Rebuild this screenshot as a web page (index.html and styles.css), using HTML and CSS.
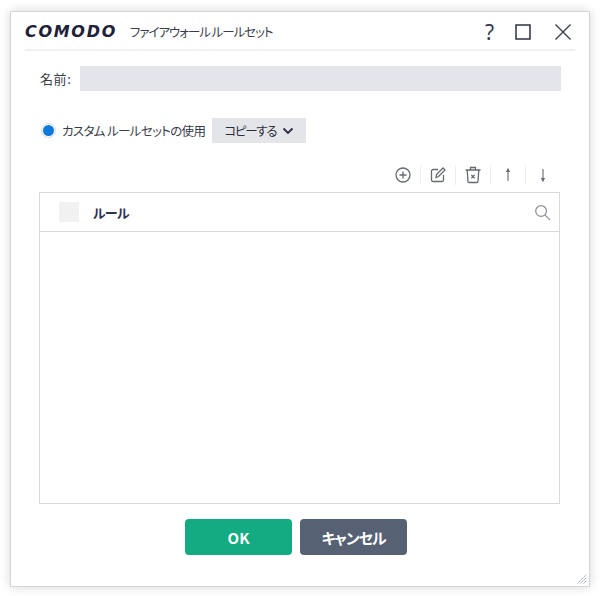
FILE: index.html
```html
<!DOCTYPE html>
<html lang="ja">
<head>
<meta charset="utf-8">
<title>COMODO</title>
<link rel="stylesheet" href="styles.css">
</head>
<body>
<div class="dialog">
  <header class="titlebar">
    <span class="logo">COMODO</span>
    <span class="title">ファイアウォール ルールセット</span>
    <div class="winbtns">
      <span class="help">?</span>
      <svg class="winicon" viewBox="0 0 16 16"><rect x="1" y="1" width="14" height="14" fill="none" stroke="#3a3d50" stroke-width="1.600"/></svg>
      <svg class="winicon" viewBox="0 0 16 16"><path d="M.5 .5l15 15M15.500 .5l-15 15" fill="none" stroke="#3a3d50" stroke-width="1.400"/></svg>
    </div>
  </header>
  <div class="name-row">
    <label class="name-label">名前:</label>
    <div class="name-input"></div>
  </div>
  <div class="mode-row">
    <span class="radio"></span>
    <span class="mode-label">カスタム ルールセットの使用</span>
    <button class="copy-btn"><span class="copy-text">コピーする</span>
      <svg class="chev" viewBox="0 0 12 8"><path d="M1.500 1.500L6 6l4.500-4.500" fill="none" stroke="#2b2e3c" stroke-width="1.800"/></svg>
    </button>
  </div>
  <div class="toolbar">
    <svg class="tool" viewBox="0 0 18 18"><circle cx="9" cy="9" r="7" fill="none" stroke="#666a72" stroke-width="1.300"/><path d="M5.500 9h7M9 5.500v7" stroke="#666a72" stroke-width="1.300"/></svg>
    <span class="sep"></span>
    <svg class="tool" viewBox="0 0 18 18"><path d="M9 3.500H4a1.500 1.500 0 0 0-1.500 1.500v9A1.500 1.500 0 0 0 4 15.500h9a1.500 1.500 0 0 0 1.500-1.500V9" fill="none" stroke="#666a72" stroke-width="1.300"/><path d="M7 11.500l.5-3L14 2l2 2-6.500 6.500z" fill="none" stroke="#666a72" stroke-width="1.300"/></svg>
    <span class="sep"></span>
    <svg class="tool" viewBox="0 0 18 18"><path d="M1.500 4h15M6.500 4V1.500h5V4M3.200 4l.8 11.500a1 1 0 0 0 1 1h8a1 1 0 0 0 1-1L14.800 4" fill="none" stroke="#666a72" stroke-width="1.300"/><path d="M7.400 9l3.200 3.200M10.600 9l-3.200 3.200" stroke="#666a72" stroke-width="1.300"/></svg>
    <span class="sep"></span>
    <svg class="tool" viewBox="0 0 18 18"><path d="M9 15V4M7.800 5.500L9 3l1.200 2.500z" fill="#666a72" stroke="#666a72" stroke-width="1.100"/></svg>
    <span class="sep"></span>
    <svg class="tool" viewBox="0 0 18 18"><path d="M9 3v11M7.800 12.500L9 15l1.200-2.500z" fill="#666a72" stroke="#666a72" stroke-width="1.100"/></svg>
  </div>
  <section class="table">
    <div class="thead">
      <span class="check"></span>
      <span class="col">ルール</span>
      <svg class="search" viewBox="0 0 18 18"><circle cx="7.500" cy="7.500" r="5.700" fill="none" stroke="#8b8e95" stroke-width="1.300"/><path d="M11.800 11.800l5 5" stroke="#8b8e95" stroke-width="1.300"/></svg>
    </div>
    <div class="tbody"></div>
  </section>
  <footer class="actions">
    <button class="btn ok">OK</button>
    <button class="btn cancel">キャンセル</button>
  </footer>
  <svg class="grip" viewBox="0 0 10 10"><path d="M0.500 9.500l9-9M3.500 9.500l6-6M6.500 9.500l3-3" stroke="#9aa3b5" stroke-width="1" stroke-dasharray="1.500 .7" fill="none"/></svg>
</div>
</body>
</html>
```
FILE: styles.css
```css
* { box-sizing: border-box; }
html, body { height: 100%; }
body {
  margin: 0;
  padding: 11px 10px 9px;
  background: #fff;
  font-family: "Noto Sans CJK JP", "Noto Sans", sans-serif;
  font-feature-settings: "palt";
  color: #2b2e3c;
}
.dialog {
  position: relative;
  height: 576px;
  background: #fff;
  border: 1px solid #d4d4d4;
  box-shadow: 0 0 10px rgba(0, 0, 0, .16);
  display: flex;
  flex-direction: column;
}
.titlebar {
  height: 39px;
  margin: 0 14px;
  padding-top: 2px;
  border-bottom: 2px solid #f0f0f0;
  display: flex;
  align-items: center;
  flex: none;
}
.logo {
  font-family: "DejaVu Sans", sans-serif;
  font-weight: 700;
  font-style: italic;
  font-size: 16px;
  letter-spacing: 1.700px;
  color: #20203a;
  width: 92px;
  white-space: nowrap;
}
.title {
  margin-left: 13px;
  font-size: 12.500px;
  letter-spacing: -1.050px;
  color: #3a3d4a;
}
.winbtns {
  margin-left: auto;
  display: flex;
  align-items: center;
  margin-right: 4px;
}
.help {
  font-family: "Noto Sans", sans-serif;
  font-size: 21px;
  line-height: 24px;
  color: #3a3d50;
  margin-right: 21px;
}
.winicon { width: 16px; height: 16px; }
.winicon + .winicon { margin-left: 24px; }
.name-row {
  display: flex;
  align-items: center;
  height: 25px;
  margin: 15px 28px 0 29px;
}
.name-label { font-size: 13px; letter-spacing: .6px; width: 40px; flex: none; color: #3a3d4a; }
.name-input { flex: 1; height: 25px; background: #e4e5e9; }
.mode-row {
  display: flex;
  align-items: center;
  height: 25px;
  margin: 27px 0 0 30px;
}
.radio {
  width: 15px;
  height: 15px;
  padding: 1px;
  border: 1px solid #d4d8de;
  border-radius: 50%;
  background: #0f78dc content-box;
  flex: none;
}
.mode-label { margin-left: 6px; font-size: 12.500px; letter-spacing: -.65px; color: #3a3d4a; white-space: nowrap; }
.copy-btn {
  margin-left: 7px;
  width: 94px;
  height: 25px;
  border: 0;
  background: #e4e5e9;
  font: inherit;
  font-size: 12.500px;
  color: #2b2e3c;
  display: flex;
  align-items: center;
  justify-content: center;
  gap: 6px;
  padding: 0;
}
.copy-text { letter-spacing: -1.300px; }
.chev { width: 12px; height: 8px; }
.toolbar {
  display: flex;
  align-items: center;
  justify-content: flex-end;
  height: 22px;
  margin: 21px 37px 0 0;
}
.tool { width: 18px; height: 18px; }
.sep { width: 1px; height: 20px; background: #eeeeee; margin: 0 8px; }
.table {
  margin: 6px 29px 0 28px;
  height: 312px;
  border: 1px solid #d9d9d9;
  display: flex;
  flex-direction: column;
}
.thead {
  height: 39px;
  border-bottom: 1px solid #d9d9d9;
  display: flex;
  align-items: center;
  padding: 0 8px 0 19px;
  flex: none;
}
.check { width: 20px; height: 20px; background: #f1f1f1; }
.col { margin-left: 14px; font-size: 13px; letter-spacing: -.7px; font-weight: 700; color: #2b3350; }
.search { width: 17px; height: 17px; margin-left: auto; }
.tbody { flex: 1; }
.actions {
  display: flex;
  justify-content: center;
  gap: 8px;
  margin-top: 15px;
  padding-right: 8px;
}
.btn {
  width: 107px;
  height: 36px;
  border: 0;
  border-radius: 4px;
  font: inherit;
  font-size: 15px;
  font-weight: 700;
  color: #fff;
  padding: 0;
}
.cancel { letter-spacing: -1px; }
.ok { background: #12ab82; }
.cancel { background: #566273; }
.grip { position: absolute; right: 2px; bottom: 2px; width: 10px; height: 10px; }
```
